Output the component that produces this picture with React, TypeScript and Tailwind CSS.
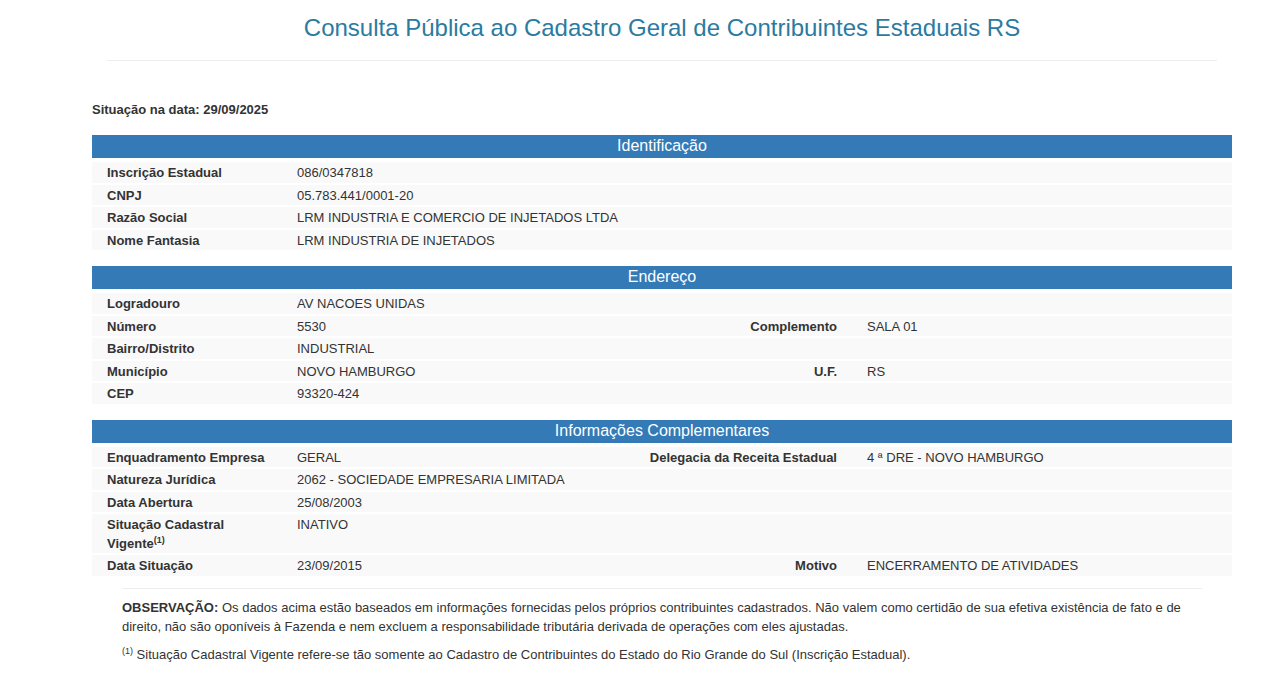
import React from "react";

type Row = {
  label: React.ReactNode;
  value: string;
  label2?: string;
  value2?: string;
};

const sections: { title: string; rows: Row[] }[] = [
  {
    title: "Identificação",
    rows: [
      { label: "Inscrição Estadual", value: "086/0347818" },
      { label: "CNPJ", value: "05.783.441/0001-20" },
      { label: "Razão Social", value: "LRM INDUSTRIA E COMERCIO DE INJETADOS LTDA" },
      { label: "Nome Fantasia", value: "LRM INDUSTRIA DE INJETADOS" },
    ],
  },
  {
    title: "Endereço",
    rows: [
      { label: "Logradouro", value: "AV NACOES UNIDAS" },
      { label: "Número", value: "5530", label2: "Complemento", value2: "SALA 01" },
      { label: "Bairro/Distrito", value: "INDUSTRIAL" },
      { label: "Município", value: "NOVO HAMBURGO", label2: "U.F.", value2: "RS" },
      { label: "CEP", value: "93320-424" },
    ],
  },
  {
    title: "Informações Complementares",
    rows: [
      {
        label: "Enquadramento Empresa",
        value: "GERAL",
        label2: "Delegacia da Receita Estadual",
        value2: "4 ª DRE - NOVO HAMBURGO",
      },
      { label: "Natureza Jurídica", value: "2062 - SOCIEDADE EMPRESARIA LIMITADA" },
      { label: "Data Abertura", value: "25/08/2003" },
      {
        label: (
          <>
            Situação Cadastral Vigente<sup className="text-[9px]">(1)</sup>
          </>
        ),
        value: "INATIVO",
      },
      {
        label: "Data Situação",
        value: "23/09/2015",
        label2: "Motivo",
        value2: "ENCERRAMENTO DE ATIVIDADES",
      },
    ],
  },
];

function Section({ title, rows }: { title: string; rows: Row[] }) {
  return (
    <div className="mb-4">
      <div className="h-[23px] bg-[#337ab7] text-center text-[16px] leading-[22px] text-white">
        {title}
      </div>
      <div className="mt-1 flex flex-col gap-[2px]">
        {rows.map((r, i) => (
          <div
            key={i}
            className="grid grid-cols-[190px_350px_220px_380px] bg-[#f9f9f9] pt-[2px] text-[13px] leading-[18.5px]"
          >
            <div className="px-[15px] font-bold">{r.label}</div>
            <div className="whitespace-nowrap px-[15px]">{r.value}</div>
            <div className="whitespace-nowrap px-[15px] text-right font-bold">{r.label2}</div>
            <div className="whitespace-nowrap px-[15px]">{r.value2}</div>
          </div>
        ))}
      </div>
    </div>
  );
}

export default function App() {
  return (
    <div className="min-h-screen bg-white font-['Liberation_Sans',Arial,sans-serif] text-[#333]">
      <div className="ml-[92px] w-[1140px] pt-[15px]">
        <div className="px-[15px]">
          <h1 className="text-center text-[24px] leading-[26px] text-[#2b7ba1]">
            Consulta Pública ao Cadastro Geral de Contribuintes Estaduais RS
          </h1>
          <div className="mt-[19px] border-t border-[#eee]" />
        </div>

        <p className="mt-[40px] text-[13px] font-bold leading-[18px]">Situação na data: 29/09/2025</p>

        <div className="mt-[16px]">
          {sections.map((s) => (
            <Section key={s.title} title={s.title} rows={s.rows} />
          ))}
        </div>

        <div className="mx-[30px] -mt-1 border-t border-[#eee] pt-[9px] text-[13px] leading-[19px]">
          <p>
            <b>OBSERVAÇÃO:</b> Os dados acima estão baseados em informações fornecidas pelos próprios
            contribuintes cadastrados. Não valem como certidão de sua efetiva existência de fato e de
            direito, não são oponíveis à Fazenda e nem excluem a responsabilidade tributária derivada de
            operações com eles ajustadas.
          </p>
          <p className="mt-[9px]">
            <sup className="text-[9px]">(1)</sup> Situação Cadastral Vigente refere-se tão somente ao Cadastro
            de Contribuintes do Estado do Rio Grande do Sul (Inscrição Estadual).
          </p>
        </div>
      </div>
    </div>
  );
}
